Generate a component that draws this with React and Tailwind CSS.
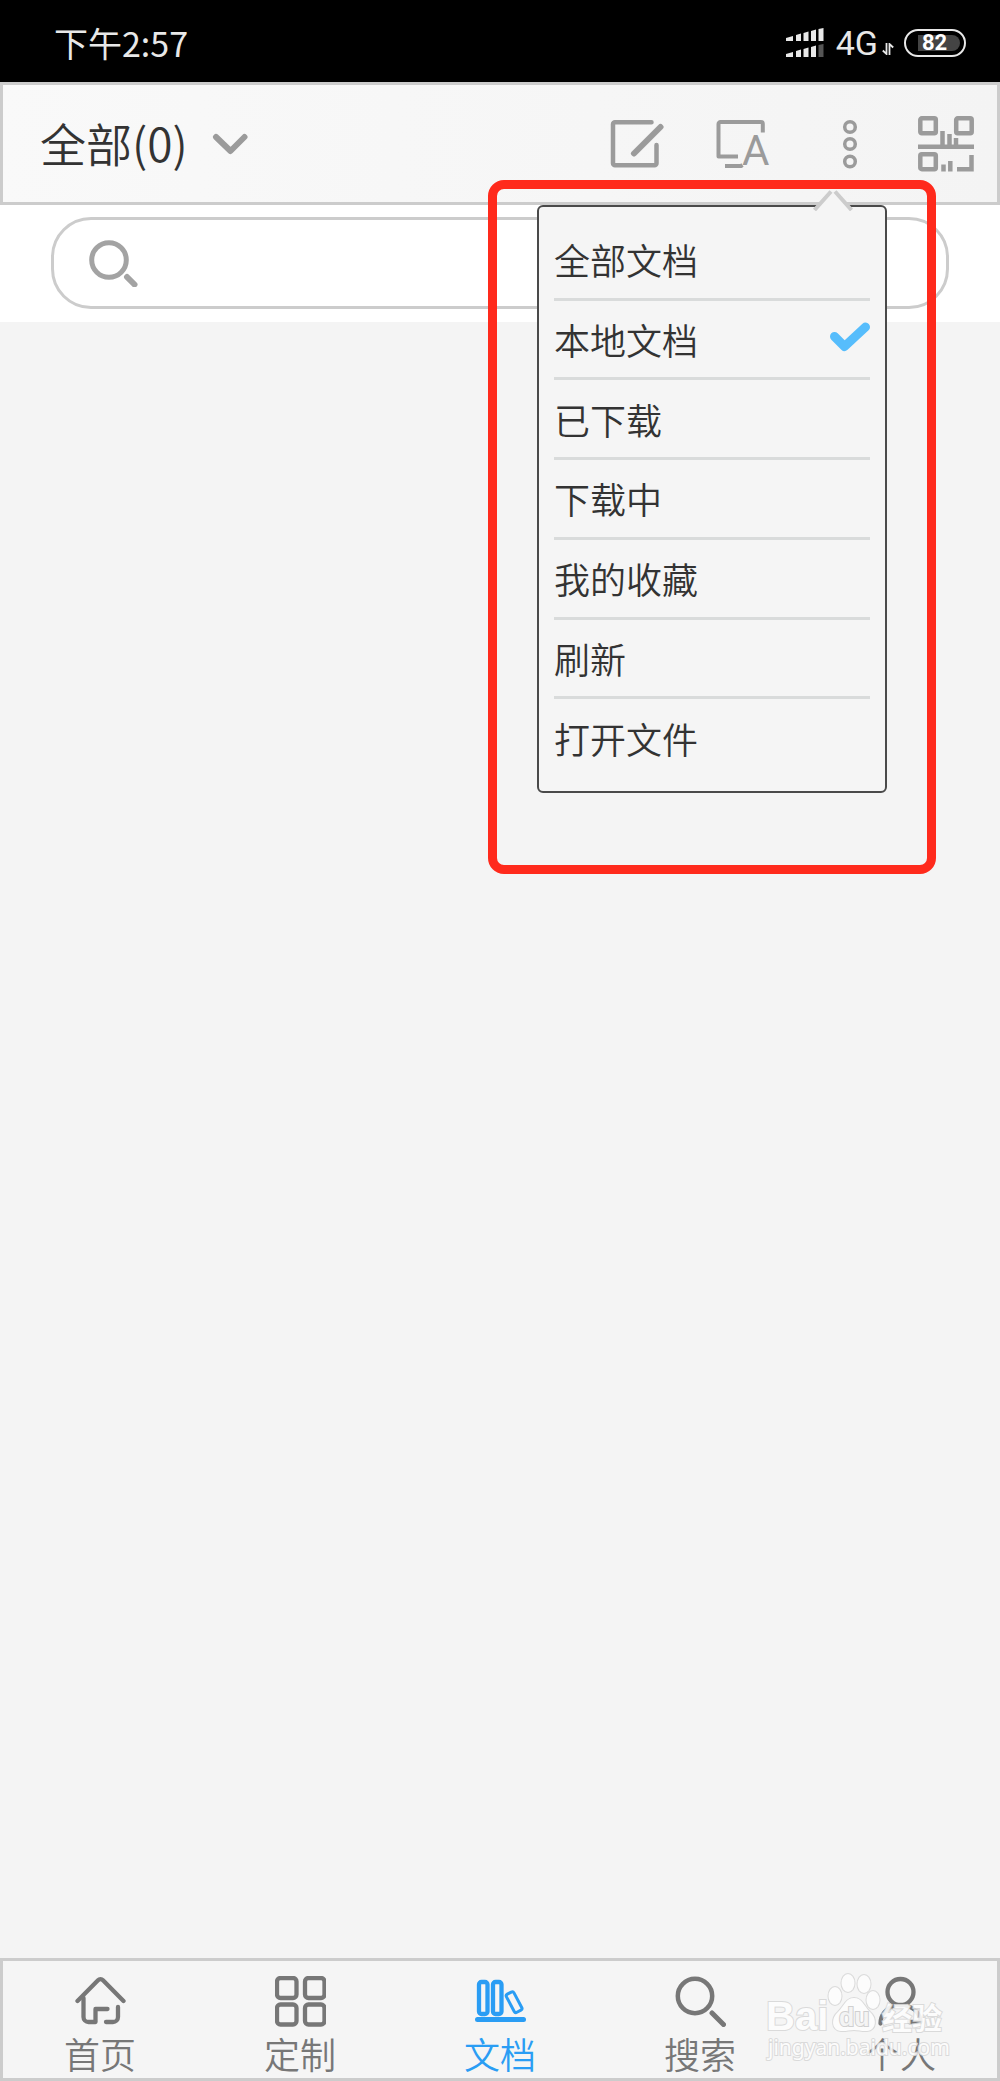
const MENU_ITEMS = ['全部文档', '本地文档', '已下载', '下载中', '我的收藏', '刷新', '打开文件'];

const SignalIcon = () => (
  <svg className="w-[38px] h-[30px]" viewBox="0 0 38 30" fill="#e8e8e8">
    <path d="M0 10l7-2v5H0zM10 7l5-1.500v7.500h-5zM17.500 5l5-1.500v9.500h-5zM25 3l5-1.500v11.500h-5zM32.500 1l5-1v13h-5z" />
    <path d="M0 26l7-2v5H0zM10 23l5-1.500v7.500h-5zM17.500 21l5-1.500v9.500h-5zM25 19l5-1.500v11.500h-5z" />
    <path d="M32.500 17l5-1v13h-5z" fill="#555" />
  </svg>
);

const DataIcon = () => (
  <svg className="w-3 h-3" viewBox="0 0 12 12" fill="none" stroke="#e8e8e8" strokeWidth="1.800">
    <path d="M4.500 0v11L0.800 7.500M7.500 12V1l3.700 3.500" />
  </svg>
);

const EditIcon = () => (
  <svg className="w-[54px] h-[50px]" viewBox="0 0 54 50" fill="none" stroke="#9b9b9b" strokeWidth="4.500" strokeLinecap="round" strokeLinejoin="round">
    <path d="M41.500 3.300H5a2 2 0 0 0-2 2v39a2 2 0 0 0 2 2h39.500a2 2 0 0 0 2-2V26" />
    <path d="M24 34.500L50.500 8" strokeWidth="6" />
  </svg>
);

const TranslateIcon = () => (
  <svg className="w-[54px] h-[50px] overflow-visible" viewBox="0 0 54 50" fill="none" stroke="#9b9b9b" strokeWidth="4">
    <path d="M46.800 13.500V5a2 2 0 0 0-2-2H4.500a2 2 0 0 0-2 2v32.500H22M9 47h16l1.500-1" strokeLinejoin="round" />
    <text x="26" y="46" fontSize="42" fontWeight="400" fontFamily="Roboto, sans-serif" fill="#9b9b9b" stroke="none">A</text>
  </svg>
);

const MoreIcon = () => (
  <svg className="w-4 h-[50px]" viewBox="0 0 16 50" fill="none" stroke="#9b9b9b" strokeWidth="3.500">
    <circle cx="8" cy="8" r="5.300" />
    <circle cx="8" cy="25" r="5.300" />
    <circle cx="8" cy="42.500" r="5.300" />
  </svg>
);

const ScanIcon = () => (
  <svg className="w-14 h-14" viewBox="0 0 56 56" fill="none" stroke="#9b9b9b" strokeWidth="4.500">
    <rect x="2.300" y="2.300" width="15.500" height="15" rx="1.500" />
    <rect x="38.200" y="2.300" width="15.500" height="15" rx="1.500" />
    <rect x="2.300" y="38.200" width="15.500" height="15" rx="1.500" />
    <path d="M0 30.800h56M24.500 15v15M31.500 18v12M38 22v8M25.500 48.500v7M32.300 45v10.500" />
    <path d="M39 53.300h14.500V39" />
  </svg>
);

const HomeIcon = () => (
  <>
    <path d="M2.500 25L23 4.200a3.500 3.500 0 0 1 5 0L48.500 25" />
    <path d="M8.500 22v19a5 5 0 0 0 5 5h7V33h12" />
    <path d="M43 31v10a5 5 0 0 1-5 5h-7" />
  </>
);

const GridIcon = () => (
  <>
    <rect x="2" y="2" width="19.500" height="20" rx="3.500" />
    <rect x="30" y="2" width="19.500" height="20" rx="3.500" />
    <rect x="2" y="28.500" width="19.500" height="20" rx="3.500" />
    <rect x="30" y="28.500" width="19.500" height="20" rx="3.500" />
  </>
);

const BooksIcon = () => (
  <>
    <rect x="4" y="6" width="8.500" height="32" rx="2.500" />
    <rect x="18" y="6" width="8.500" height="32" rx="2.500" />
    <rect x="35" y="16" width="8.500" height="20.500" rx="2" transform="rotate(-28 39 26.500)" strokeWidth="3" />
    <path d="M2.500 43.500h46" strokeWidth="5" />
  </>
);

const FindIcon = () => (
  <>
    <circle cx="20" cy="20" r="17.200" strokeWidth="4.500" />
    <path d="M37 37l11.500 11.500" strokeWidth="5" />
  </>
);

const PersonIcon = () => (
  <>
    <circle cx="25.500" cy="16" r="13" />
    <path d="M20 29.500C11 32 5.500 39 5.500 47.500M31 29.500c9 2.500 14.500 9 14.500 16.500H34" />
  </>
);

const TABS = [
  { label: '首页', Icon: HomeIcon },
  { label: '定制', Icon: GridIcon },
  { label: '文档', Icon: BooksIcon, active: true },
  { label: '搜索', Icon: FindIcon },
  { label: '个人', Icon: PersonIcon },
];

const StatusBar = () => (
  <div className="flex items-center justify-between h-[82px] pt-1 pl-[54px] pr-[34px] bg-black text-[#e8e8e8]">
    <span className="text-[34px] leading-10 font-normal">下午2:57</span>
    <div className="flex items-center">
      <SignalIcon />
      <span className="ml-3 font-[Roboto] text-[34px] leading-10 font-normal">4G</span>
      <span className="ml-1 pt-3">
        <DataIcon />
      </span>
      <span className="ml-2.5 flex w-[62px] h-7 rounded-full border-2 border-[#e8e8e8] p-1 pl-3">
        <span className="flex flex-1 items-center rounded-r-full bg-[#444] pl-1 font-[Roboto] text-[22px] leading-4 font-bold text-white">
          82
        </span>
      </span>
    </div>
  </div>
);

const DocumentMenu = () => (
  <div className="absolute top-[98px] right-16 z-10 w-[448px] rounded-2xl border-[9px] border-[#ff2a1c] px-10 pt-4 pb-[72px]">
    <div className="relative rounded-md border-2 border-[#4a4a4a] bg-[#f5f5f5] px-[15px] pt-3.5 pb-3">
      <svg className="absolute -top-[18px] right-8 w-10 h-[22px]" viewBox="0 0 40 22">
        <path d="M0 22L17 1h6l17 21z" fill="#f5f5f5" />
        <path d="M1.500 21L18 2.500M38.500 21L22 2.500" stroke="#ccc" strokeWidth="4" />
      </svg>
      <ul className="grid h-[558px] auto-rows-fr">
        {MENU_ITEMS.map((item) => (
          <li key={item} className="border-b-[3px] border-[#d9dbdb] last:border-transparent">
            <button type="button" className="flex h-full w-full items-center justify-between text-left text-[36px] leading-10 text-[#333]">
              {item}
              {item === '本地文档' && (
                <svg className="w-10 h-[30px] mb-1" viewBox="0 0 40 30" fill="none" stroke="#56bdfc" strokeWidth="9" strokeLinecap="round" strokeLinejoin="round">
                  <path d="M4.500 14.500L14.500 24.500L35.500 5" />
                </svg>
              )}
            </button>
          </li>
        ))}
      </ul>
    </div>
  </div>
);

const Header = () => (
  <header className="relative flex h-[123px] items-center justify-between bg-linear-to-r from-[#f9f9f9] to-[#f4f4f4] pl-10 pr-[26px] shadow-[inset_0_0_0_3px_#ccc]">
    <button type="button" className="flex items-center gap-6 text-[46px] leading-[56px] text-[#333]">
      <span className="pb-1">全部(0)</span>
      <svg className="w-9 h-6" viewBox="0 0 36 24" fill="none" stroke="#9b9b9b" strokeWidth="6" strokeLinecap="round" strokeLinejoin="round">
        <path d="M4 5l14.500 14L32.500 5" />
      </svg>
    </button>
    <div className="flex items-center">
      <button type="button" aria-label="编辑" className="mr-[52px]"><EditIcon /></button>
      <button type="button" aria-label="翻译" className="mr-[72px]"><TranslateIcon /></button>
      <button type="button" aria-label="更多" className="mr-[60px]"><MoreIcon /></button>
      <button type="button" aria-label="扫描"><ScanIcon /></button>
    </div>
    <DocumentMenu />
  </header>
);

const SearchBar = () => (
  <div className="bg-white px-[51px] pt-3 pb-[13px]">
    <label className="flex h-[92px] items-center rounded-[40px] border-[3px] border-[#ccc] bg-white pl-[35px] pr-9">
      <svg className="w-[49px] h-[47px]" viewBox="0 0 49 47" fill="none" stroke="#a3a3a3" strokeLinecap="round">
        <circle cx="20" cy="20" r="17.300" strokeWidth="5" />
        <path d="M38 37l7.500 7.500" strokeWidth="6" />
      </svg>
      <input type="search" aria-label="搜索文档" className="ml-4 min-w-0 flex-1 bg-transparent text-[36px] outline-none" />
    </label>
  </div>
);

const Watermark = () => (
  <svg className="pointer-events-none absolute right-[50px] bottom-4 w-[184px] h-[92px] overflow-visible" viewBox="0 0 184 92" fill="#fdfdfd" stroke="#d8d8d8" strokeWidth="2" paintOrder="stroke" fontFamily="'Liberation Sans', sans-serif">
    <g opacity="0.9">
      <ellipse cx="69" cy="23" rx="6.500" ry="9" />
      <ellipse cx="82" cy="10" rx="6.500" ry="9" />
      <ellipse cx="98" cy="11" rx="6.500" ry="9" />
      <ellipse cx="107" cy="27" rx="6.500" ry="9" />
      <path d="M88 25c8 0 10 8 16 14 7 6 7 18-3 19-5 .5-8-1-13-1s-8 1.500-13 1c-10-1-10-13-3-19 6-6 8-14 16-14z" />
      <text x="0" y="57" fontSize="40" fontWeight="700">Bai</text>
      <text x="73" y="53" fontSize="25" fontWeight="700" fill="#f4f4f4" stroke="#ccc">du</text>
      <text x="116" y="56" fontSize="30" fontWeight="700" fontFamily="'Noto Sans CJK SC', sans-serif">经验</text>
      <text x="2" y="82" fontSize="21" fontWeight="400" fontFamily="'Noto Sans', sans-serif">jingyan.baidu.com</text>
    </g>
  </svg>
);

const TabBar = () => (
  <footer className="relative bg-[#f5f5f5] shadow-[inset_0_0_0_3px_#ccc]">
    <nav className="grid h-[123px] grid-cols-5">
      {TABS.map(({ label, Icon, active }) => (
        <a
          key={label}
          href="#"
          className={`flex flex-col items-center pt-[18px] text-[36px] leading-10 ${active ? 'text-[#2a9df4]' : 'text-[#777]'}`}
        >
          <svg className="w-[51px] h-[51px] mb-1.5" viewBox="0 0 51 51" fill="none" stroke="currentColor" strokeWidth="4.300" strokeLinecap="round" strokeLinejoin="round">
            <Icon />
          </svg>
          {label}
        </a>
      ))}
    </nav>
    <Watermark />
  </footer>
);

export default function App() {
  return (
    <div className="flex min-h-screen flex-col bg-[#f4f4f4] font-['Noto_Sans_CJK_SC',sans-serif] font-[350]">
      <StatusBar />
      <Header />
      <SearchBar />
      <main className="flex-1" />
      <TabBar />
    </div>
  );
}
